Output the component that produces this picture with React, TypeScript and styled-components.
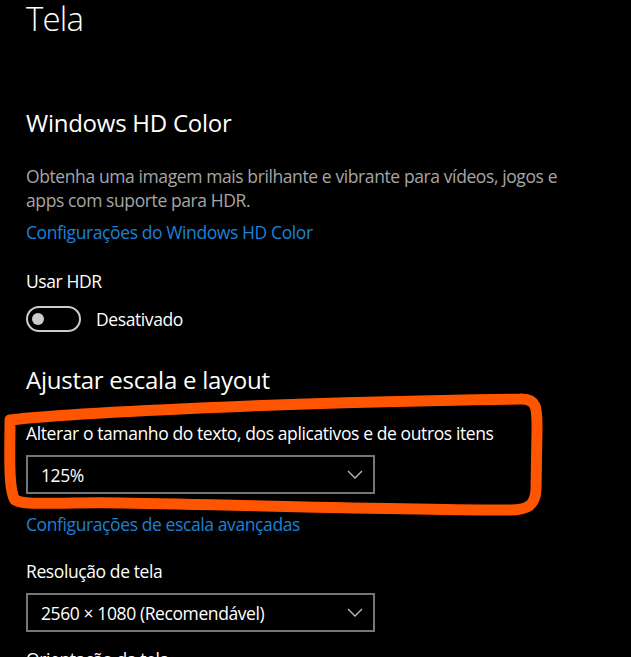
import React from 'react'
import styled, { createGlobalStyle } from 'styled-components'

const GlobalStyle = createGlobalStyle`
  html, body {
    margin: 0;
    padding: 0;
    background: #000;
    overflow: hidden;
  }
  body {
    font-family: 'Open Sans', 'Noto Sans', sans-serif;
    color: #fff;
  }
`

const Page = styled.div`
  position: relative;
  width: 631px;
  height: 657px;
  overflow: hidden;
  background: #000;
  padding-left: 26px;
  box-sizing: border-box;
`

const Title = styled.h1`
  margin: 0;
  font-size: 33px;
  line-height: 38px;
  font-weight: 300;
  letter-spacing: -0.8px;
`

const SectionTitle = styled.h2<{ gap: number }>`
  margin: ${p => p.gap}px 0 0;
  font-size: 24px;
  line-height: 32px;
  font-weight: 400;
  letter-spacing: -0.25px;
`

const bodyText = `
  font-size: 17.5px;
  line-height: 24px;
  letter-spacing: -0.4px;
`

const Description = styled.p`
  ${bodyText}
  margin: 25px 0 0;
  width: 540px;
  color: #a6a6a6;
`

const Link = styled.a<{ gap: number }>`
  ${bodyText}
  display: block;
  margin-top: ${p => p.gap}px;
  color: #1a82d8;
  text-decoration: none;
`

const Label = styled.div<{ gap: number }>`
  ${bodyText}
  margin-top: ${p => p.gap}px;
  color: #fff;
`

const ToggleRow = styled.div`
  ${bodyText}
  display: flex;
  align-items: center;
  gap: 15px;
  margin-top: 13px;
  line-height: 26px;
`

const ToggleTrack = styled.div`
  width: 55px;
  height: 26px;
  box-sizing: border-box;
  border: 2px solid #cccccc;
  border-radius: 13px;
  display: flex;
  align-items: center;
  padding-left: 4px;
`

const ToggleKnob = styled.span`
  width: 12px;
  height: 12px;
  border-radius: 50%;
  background: #cccccc;
`

const Select = styled.div`
  ${bodyText}
  margin-top: 10px;
  width: 349px;
  height: 39px;
  box-sizing: border-box;
  border: 2px solid #767676;
  display: flex;
  align-items: center;
  justify-content: space-between;
  padding: 0 10px 0 13px;
  color: #fff;
`

const Chevron = () => (
  <svg width="16" height="9" viewBox="0 0 16 9" fill="none">
    <path d="M1 1 L8 8 L15 1" stroke="#bdbdbd" strokeWidth="1.3" />
  </svg>
)

const Annotation = styled.svg`
  position: absolute;
  left: 0;
  top: 0;
  pointer-events: none;
`

export default function App() {
  return (
    <>
      <GlobalStyle />
      <Page>
        <Title>Tela</Title>

        <SectionTitle gap={69}>Windows HD Color</SectionTitle>
        <Description>
          Obtenha uma imagem mais brilhante e vibrante para vídeos, jogos e apps com suporte para HDR.
        </Description>
        <Link gap={8} href="#">Configurações do Windows HD Color</Link>

        <Label gap={25}>Usar HDR</Label>
        <ToggleRow>
          <ToggleTrack>
            <ToggleKnob />
          </ToggleTrack>
          Desativado
        </ToggleRow>

        <SectionTitle gap={32}>Ajustar escala e layout</SectionTitle>
        <Label gap={25}>Alterar o tamanho do texto, dos aplicativos e de outros itens</Label>
        <Select>
          <span>125%</span>
          <Chevron />
        </Select>
        <Link gap={18} href="#">Configurações de escala avançadas</Link>

        <Label gap={23}>Resolução de tela</Label>
        <Select>
          <span>2560 × 1080 (Recomendável)</span>
          <Chevron />
        </Select>
        <Label gap={15}>Orientação da tela</Label>

        <Annotation width="631" height="657" viewBox="0 0 631 657">
          <path
            d="M 10 420 C 60 414, 150 410, 250 406 S 450 400, 520 399 C 538 398, 537 410, 537 430 L 536 490 C 535 505, 528 510, 510 510 C 400 510, 250 505, 120 503 C 60 502, 25 506, 15 500 C 8 490, 10 450, 10 420 Z"
            fill="none"
            stroke="#ff5500"
            strokeWidth="11"
            strokeLinecap="round"
            strokeLinejoin="round"
          />
        </Annotation>
      </Page>
    </>
  )
}
